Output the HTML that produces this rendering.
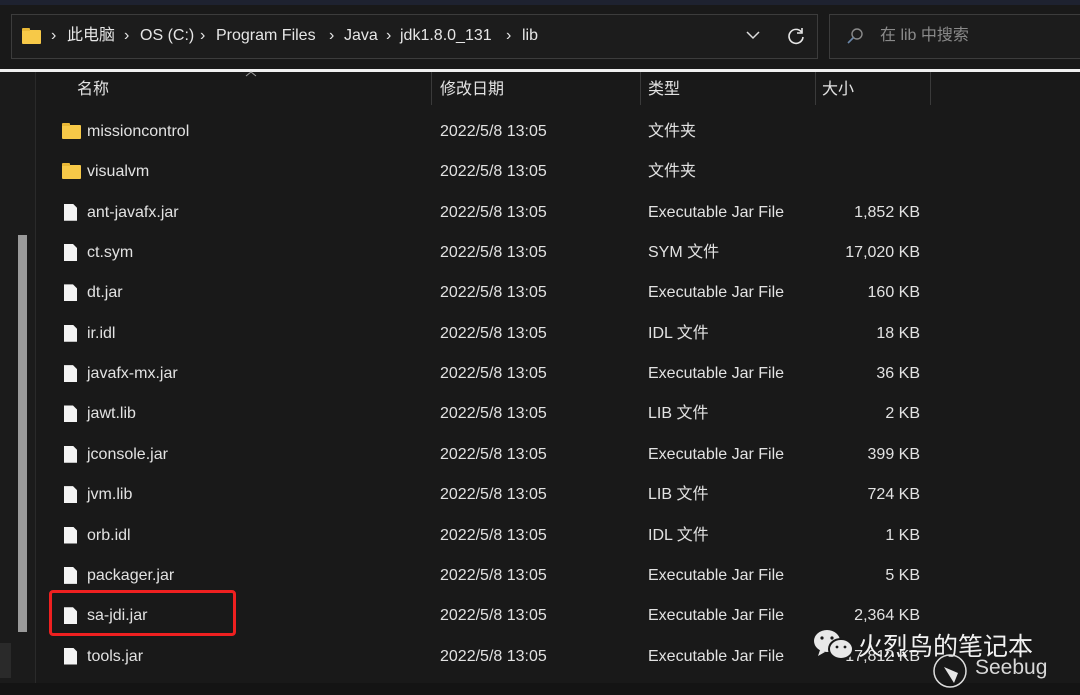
<!DOCTYPE html>
<html><head><meta charset="utf-8"><style>
*{margin:0;padding:0;box-sizing:border-box}
body{width:1080px;height:695px;background:#191919;overflow:hidden;position:relative;font-family:"Segoe UI","Liberation Sans","Noto Sans CJK SC",sans-serif;color:#e2e2e2;font-size:16px}
.abs{position:absolute}
.top{left:0;top:0;width:1080px;height:5px;background:#1e2230}
.box{border:1px solid #3c3c3c;background:#1c1c1c;top:14px;height:45px}
.t{position:absolute;white-space:nowrap;line-height:20px}
.b{position:absolute;white-space:nowrap;line-height:20px;top:26px;color:#e6e6e6}
.sep{position:absolute;top:72px;height:33px;width:1px;background:#3a3a3a}
.file{position:absolute;width:13px;height:17px;background:#f4f4f4;clip-path:polygon(0 0,9px 0,13px 4px,13px 17px,0 17px)}
.fold{position:absolute;width:19px;height:14px;background:#f7c948;border-radius:1px}
.fold:before{content:"";position:absolute;left:0;top:-2px;width:8px;height:3px;background:#e9b836;border-radius:1px 1px 0 0}
</style></head><body>
<div class="abs top"></div>
<div class="abs box" style="left:11px;width:807px"></div>
<div class="abs box" style="left:829px;width:260px"></div>
<div class="fold" style="left:22px;top:30px"></div>
<div class="b" style="left:51px">›</div>
<div class="b" style="left:67px">此电脑</div>
<div class="b" style="left:124px">›</div>
<div class="b" style="left:140px">OS (C:)</div>
<div class="b" style="left:200px">›</div>
<div class="b" style="left:216px">Program Files</div>
<div class="b" style="left:329px">›</div>
<div class="b" style="left:344px">Java</div>
<div class="b" style="left:386px">›</div>
<div class="b" style="left:400px">jdk1.8.0_131</div>
<div class="b" style="left:506px">›</div>
<div class="b" style="left:522px">lib</div>
<svg class="abs" style="left:744px;top:28px" width="18" height="14"><path d="M3 4l6 6 6-6" fill="none" stroke="#ddd" stroke-width="1.5"/></svg>
<svg class="abs" style="left:786px;top:26px" width="20" height="20"><path d="M15.5 6A7 7 0 1 0 17 11" fill="none" stroke="#e6e6e6" stroke-width="1.6"/><path d="M16 2v5h-5" fill="none" stroke="#e6e6e6" stroke-width="1.6"/></svg>
<svg class="abs" style="left:846px;top:27px" width="18" height="18"><circle cx="11" cy="7" r="5" fill="none" stroke="#8a8a8a" stroke-width="1.4"/><path d="M7.5 10.5L2 16" stroke="#6a86a8" stroke-width="1.6"/></svg>
<div class="t" style="left:880px;top:26px;color:#8a8a8a">在 lib 中搜索</div>
<div class="abs" style="left:0;top:69px;width:1080px;height:3px;background:#f0f0f0"></div>
<div class="abs" style="left:0;top:72px;width:35px;height:611px;background:#1b1b1b"></div>
<div class="abs" style="left:35px;top:72px;width:1px;height:611px;background:#2a2a2a"></div>
<div class="abs" style="left:18px;top:235px;width:9px;height:397px;background:#9a9a9a"></div>
<div class="abs" style="left:0;top:643px;width:11px;height:35px;background:#2a2a2a"></div>
<div class="abs" style="left:0;top:683px;width:1080px;height:12px;background:#141414"></div>
<svg class="abs" style="left:244px;top:70px" width="14" height="8"><path d="M2 6l5-4 5 4" fill="none" stroke="#999" stroke-width="1"/></svg>
<div class="t" style="left:77px;top:80px">名称</div>
<div class="sep" style="left:431px"></div><div class="t" style="left:440px;top:80px">修改日期</div>
<div class="sep" style="left:640px"></div><div class="t" style="left:648px;top:80px">类型</div>
<div class="sep" style="left:815px"></div><div class="t" style="left:822px;top:80px">大小</div>
<div class="sep" style="left:930px"></div>
<div id="rows"></div>
<div class="abs" style="left:49px;top:590px;width:187px;height:46px;border:3px solid #ee2020;border-radius:4px"></div>
<svg class="abs" style="left:810px;top:625px" width="50" height="40"><ellipse cx="17" cy="16" rx="13" ry="11" fill="#e8e8e8"/><path d="M10 25l-2 6 7-4z" fill="#e8e8e8"/><ellipse cx="31" cy="24" rx="12" ry="10" fill="#e8e8e8" stroke="#191919" stroke-width="2"/><circle cx="12" cy="13" r="1.6" fill="#191919"/><circle cx="22" cy="13" r="1.6" fill="#191919"/><circle cx="27" cy="22" r="1.4" fill="#191919"/><circle cx="35" cy="22" r="1.4" fill="#191919"/></svg>
<div class="t" style="left:858px;top:630px;font-size:25px;line-height:30px;color:#f2f2f2;font-family:'Noto Sans CJK SC',sans-serif">火烈鸟的笔记本</div>
<svg class="abs" style="left:932px;top:653px" width="36" height="36"><circle cx="18" cy="18" r="16" fill="none" stroke="#ddd" stroke-width="1.5"/><path d="M12 14l10 16 4-10z" fill="#e6e6e6"/></svg>
<div class="t" style="left:975px;top:655px;font-size:21px;line-height:26px;color:#d8d8d8">Seebug</div>
<script>
var R=[["missioncontrol","文件夹","",1],["visualvm","文件夹","",1],["ant-javafx.jar","Executable Jar File","1,852 KB"],["ct.sym","SYM 文件","17,020 KB"],["dt.jar","Executable Jar File","160 KB"],["ir.idl","IDL 文件","18 KB"],["javafx-mx.jar","Executable Jar File","36 KB"],["jawt.lib","LIB 文件","2 KB"],["jconsole.jar","Executable Jar File","399 KB"],["jvm.lib","LIB 文件","724 KB"],["orb.idl","IDL 文件","1 KB"],["packager.jar","Executable Jar File","5 KB"],["sa-jdi.jar","Executable Jar File","2,364 KB"],["tools.jar","Executable Jar File","17,812 KB"]];
var h="";R.forEach(function(r,i){var c=132+40.35*i;var y=c-10;
h+=r[3]?'<div class="fold" style="left:62px;top:'+(c-7)+'px"></div>':'<div class="file" style="left:64px;top:'+(c-9)+'px"></div>';
h+='<div class="t" style="left:87px;top:'+y+'px">'+r[0]+'</div><div class="t" style="left:440px;top:'+y+'px">2022/5/8 13:05</div><div class="t" style="left:648px;top:'+y+'px">'+r[1]+'</div>';
if(r[2])h+='<div class="t" style="right:160px;top:'+y+'px">'+r[2]+'</div>';});
document.getElementById("rows").innerHTML=h;
</script>
</body></html>
